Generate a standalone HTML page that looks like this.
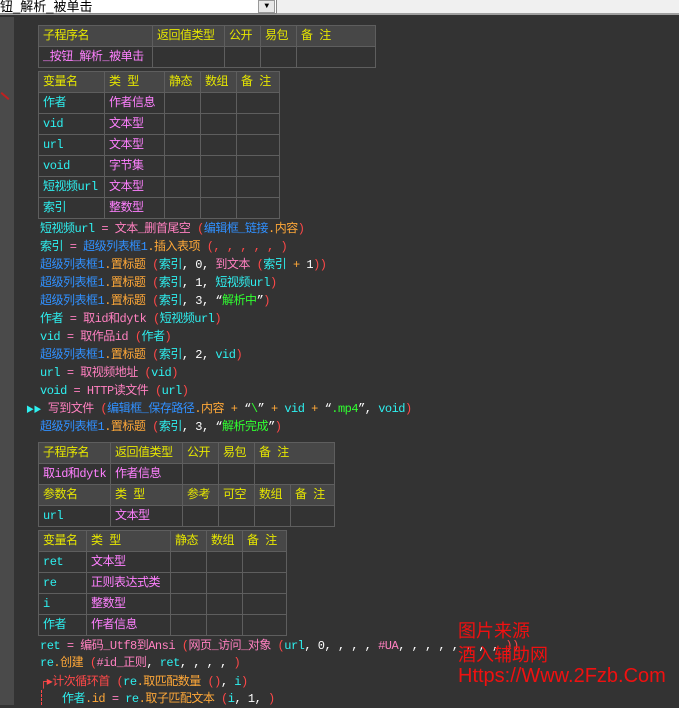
<!DOCTYPE html>
<html><head><meta charset="utf-8"><style>
*{margin:0;padding:0;box-sizing:border-box}
body{width:679px;height:705px;overflow:hidden;background:#333;position:relative;font-family:"Liberation Mono","WenQuanYi Zen Hei","Noto Sans CJK SC",monospace;font-size:12px;letter-spacing:-0.5px;color:#fff}
#top{position:absolute;left:0;top:0;width:679px;height:15px;background:#f0f0f0;border-bottom:2px solid #a0a0a0}
#combo{position:absolute;left:0;top:0;width:277px;height:14px;background:#fff;border-right:1px solid #888;border-bottom:1px solid #888;font-size:13px;line-height:13px;color:#000;font-family:"WenQuanYi Zen Hei",sans-serif;letter-spacing:0}
#btn{position:absolute;left:258px;top:0;width:17px;height:13px;background:#e8e8e8;border:1px solid #999;font-size:8px;text-align:center;line-height:11px;color:#000}
#gutter{position:absolute;left:0;top:17px;width:14px;height:688px;background:#4a4a4a}
table{position:absolute;border-collapse:collapse;table-layout:fixed}
td{border:1px solid #5e5e5e;height:21px;padding:0 0 0 4px;white-space:nowrap;overflow:hidden;line-height:19px}
tr.h td{background:#474747;color:#e6e600}
.c{color:#2ef0f0}.m{color:#ff80ff}.b{color:#3090ff}.o{color:#ffa838}.p{color:#ff80c0}.r{color:#ff4848}.w{color:#fff}.g{color:#30ff30}
.l{position:absolute;left:40px;height:18px;line-height:18px;white-space:nowrap}
.wm{position:absolute;left:458px;color:#f01010;font-size:18px;line-height:20px;white-space:nowrap;font-family:"WenQuanYi Zen Hei",sans-serif;letter-spacing:0}
</style></head><body>
<div id="top"><div id="combo">钮_解析_被单击</div><div id="btn">▼</div></div>
<div id="gutter"></div>
<div style="position:absolute;left:0;top:95px;width:10px;height:2px;background:#c02020;transform:rotate(40deg)"></div>

<table style="left:38px;top:25px;width:337px">
<colgroup><col style="width:114px"><col style="width:72px"><col style="width:36px"><col style="width:36px"><col style="width:79px"></colgroup>
<tr class="h"><td>子程序名</td><td>返回值类型</td><td>公开</td><td>易包</td><td>备 注</td></tr>
<tr><td class="m">_按钮_解析_被单击</td><td></td><td></td><td></td><td></td></tr>
</table>

<table style="left:38px;top:71px;width:241px">
<colgroup><col style="width:66px"><col style="width:60px"><col style="width:36px"><col style="width:36px"><col style="width:43px"></colgroup>
<tr class="h"><td>变量名</td><td>类 型</td><td>静态</td><td>数组</td><td>备 注</td></tr>
<tr><td class="c">作者</td><td class="m">作者信息</td><td></td><td></td><td></td></tr>
<tr><td class="c">vid</td><td class="m">文本型</td><td></td><td></td><td></td></tr>
<tr><td class="c">url</td><td class="m">文本型</td><td></td><td></td><td></td></tr>
<tr><td class="c">void</td><td class="m">字节集</td><td></td><td></td><td></td></tr>
<tr><td class="c">短视频url</td><td class="m">文本型</td><td></td><td></td><td></td></tr>
<tr><td class="c">索引</td><td class="m">整数型</td><td></td><td></td><td></td></tr>
</table>

<div class="l" style="top:220px"><span class="c">短视频url</span> <span class="p">= 文本_删首尾空</span> <span class="r">(</span><span class="b">编辑框_链接</span><span class="o">.内容</span><span class="r">)</span></div>
<div class="l" style="top:238px"><span class="c">索引</span> <span class="p">=</span> <span class="b">超级列表框1</span><span class="o">.插入表项</span> <span class="r">(, , , , , )</span></div>
<div class="l" style="top:256px"><span class="b">超级列表框1</span><span class="o">.置标题</span> <span class="r">(</span><span class="c">索引</span>, <span class="w">0</span>, <span class="p">到文本</span> <span class="r">(</span><span class="c">索引</span> <span class="o">+</span> <span class="w">1</span><span class="r">))</span></div>
<div class="l" style="top:274px"><span class="b">超级列表框1</span><span class="o">.置标题</span> <span class="r">(</span><span class="c">索引</span>, <span class="w">1</span>, <span class="c">短视频url</span><span class="r">)</span></div>
<div class="l" style="top:292px"><span class="b">超级列表框1</span><span class="o">.置标题</span> <span class="r">(</span><span class="c">索引</span>, <span class="w">3</span>, <span class="w">“</span><span class="g">解析中</span><span class="w">”</span><span class="r">)</span></div>
<div class="l" style="top:310px"><span class="c">作者</span> <span class="p">= 取id和dytk</span> <span class="r">(</span><span class="c">短视频url</span><span class="r">)</span></div>
<div class="l" style="top:328px"><span class="c">vid</span> <span class="p">= 取作品id</span> <span class="r">(</span><span class="c">作者</span><span class="r">)</span></div>
<div class="l" style="top:346px"><span class="b">超级列表框1</span><span class="o">.置标题</span> <span class="r">(</span><span class="c">索引</span>, <span class="w">2</span>, <span class="c">vid</span><span class="r">)</span></div>
<div class="l" style="top:364px"><span class="c">url</span> <span class="p">= 取视频地址</span> <span class="r">(</span><span class="c">vid</span><span class="r">)</span></div>
<div class="l" style="top:382px"><span class="c">void</span> <span class="p">= HTTP读文件</span> <span class="r">(</span><span class="c">url</span><span class="r">)</span></div>
<div class="l" style="top:400px;left:26px"><span class="c" style="font-size:8px">▶▶</span> <span class="p">写到文件</span> <span class="r">(</span><span class="b">编辑框_保存路径</span><span class="o">.内容</span> <span class="o">+</span> <span class="w">“</span><span class="g">\</span><span class="w">”</span> <span class="o">+</span> <span class="c">vid</span> <span class="o">+</span> <span class="w">“</span><span class="g">.mp4</span><span class="w">”</span>, <span class="c">void</span><span class="r">)</span></div>
<div class="l" style="top:418px"><span class="b">超级列表框1</span><span class="o">.置标题</span> <span class="r">(</span><span class="c">索引</span>, <span class="w">3</span>, <span class="w">“</span><span class="g">解析完成</span><span class="w">”</span><span class="r">)</span></div>

<table style="left:38px;top:442px;width:296px">
<colgroup><col style="width:72px"><col style="width:72px"><col style="width:36px"><col style="width:36px"><col style="width:36px"><col style="width:44px"></colgroup>
<tr class="h"><td>子程序名</td><td>返回值类型</td><td>公开</td><td>易包</td><td colspan="2">备 注</td></tr>
<tr><td class="m">取id和dytk</td><td class="m">作者信息</td><td></td><td></td><td colspan="2"></td></tr>
<tr class="h"><td>参数名</td><td>类 型</td><td>参考</td><td>可空</td><td>数组</td><td>备 注</td></tr>
<tr><td class="c">url</td><td class="m">文本型</td><td></td><td></td><td></td><td></td></tr>
</table>

<table style="left:38px;top:530px;width:248px">
<colgroup><col style="width:48px"><col style="width:84px"><col style="width:36px"><col style="width:36px"><col style="width:44px"></colgroup>
<tr class="h"><td>变量名</td><td>类 型</td><td>静态</td><td>数组</td><td>备 注</td></tr>
<tr><td class="c">ret</td><td class="m">文本型</td><td></td><td></td><td></td></tr>
<tr><td class="c">re</td><td class="m">正则表达式类</td><td></td><td></td><td></td></tr>
<tr><td class="c">i</td><td class="m">整数型</td><td></td><td></td><td></td></tr>
<tr><td class="c">作者</td><td class="m">作者信息</td><td></td><td></td><td></td></tr>
</table>

<div class="l" style="top:637px"><span class="c">ret</span> <span class="p">= 编码_Utf8到Ansi</span> <span class="r">(</span><span class="p">网页_访问_对象</span> <span class="r">(</span><span class="c">url</span>, <span class="w">0</span>, , , , <span class="p">#UA</span>, , , , , , , , <span class="r">))</span></div>
<div class="l" style="top:654px"><span class="c">re</span><span class="o">.创建</span> <span class="r">(</span><span class="p">#id_正则</span>, <span class="c">ret</span>, , , , <span class="r">)</span></div>
<div class="l" style="top:673px"><span class="r">┌▸</span><span class="r">计次循环首</span> <span class="r">(</span><span class="c">re</span><span class="o">.取匹配数量</span> <span class="r">()</span>, <span class="c">i</span><span class="r">)</span></div>
<div class="l" style="top:690px;left:62px"><span class="c">作者</span><span class="o">.id</span> <span class="p">=</span> <span class="c">re</span><span class="o">.取子匹配文本</span> <span class="r">(</span><span class="c">i</span>, <span class="w">1</span>, <span class="r">)</span></div>
<div style="position:absolute;left:41px;top:690px;height:15px;border-left:1px dashed #ff4848"></div>

<div class="wm" style="top:621px">图片来源</div>
<div class="wm" style="top:645px">酒入辅助网</div>
<div class="wm" style="top:666px;font-size:20px">Https://Www.2Fzb.Com</div>
</body></html>
